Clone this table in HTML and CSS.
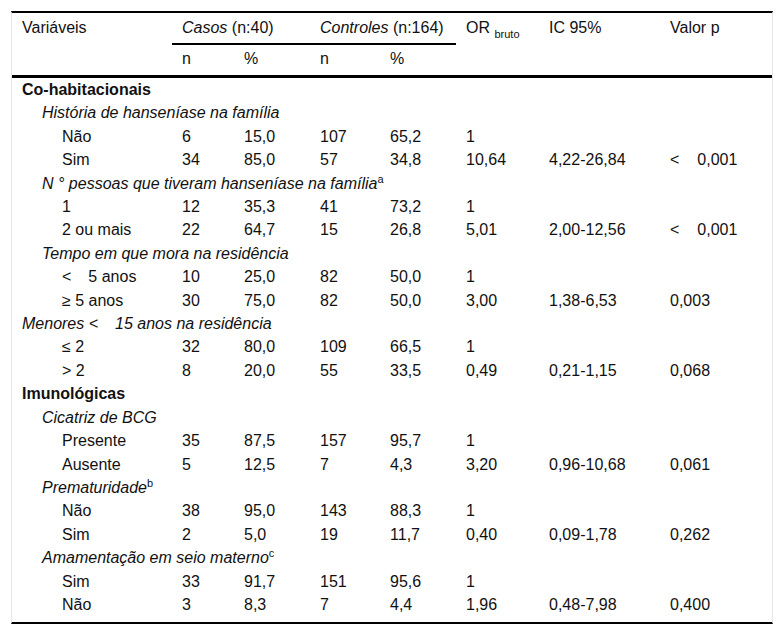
FILE: index.html
```html
<!DOCTYPE html>
<html lang="pt">
<head>
<meta charset="utf-8">
<title>Tabela</title>
<link rel="stylesheet" href="styles.css">
</head>
<body>
<div class="wrap">
<table class="tbl">
<colgroup>
<col class="c-var"><col class="c-n1"><col class="c-p1"><col class="c-n2"><col class="c-p2"><col class="c-or"><col class="c-ic"><col class="c-pv">
</colgroup>
<thead>
<tr class="h1">
<th rowspan="2" class="hv">Variáveis</th>
<th colspan="2" class="grp"><i>Casos</i> (n:40)</th>
<th colspan="2" class="grp"><i>Controles</i> (n:164)</th>
<th rowspan="2" class="hv">OR <sub class="sb">bruto</sub></th>
<th rowspan="2" class="hv">IC 95%</th>
<th rowspan="2" class="hv">Valor p</th>
</tr>
<tr class="h2">
<th>n</th><th>%</th><th>n</th><th>%</th>
</tr>
</thead>
<tbody>
<tr><td colspan="8" class="l0 b">Co-habitacionais</td></tr>
<tr><td colspan="8" class="l1 i">História de hanseníase na família</td></tr>
<tr><td class="l2">Não</td><td>6</td><td>15,0</td><td>107</td><td>65,2</td><td>1</td><td></td><td></td></tr>
<tr><td class="l2">Sim</td><td>34</td><td>85,0</td><td>57</td><td>34,8</td><td>10,64</td><td>4,22-26,84</td><td>&lt;<span class="gp"></span>0,001</td></tr>
<tr><td colspan="8" class="l1 i">N ° pessoas que tiveram hanseníase na família<sup class="sp">a</sup></td></tr>
<tr><td class="l2">1</td><td>12</td><td>35,3</td><td>41</td><td>73,2</td><td>1</td><td></td><td></td></tr>
<tr><td class="l2">2 ou mais</td><td>22</td><td>64,7</td><td>15</td><td>26,8</td><td>5,01</td><td>2,00-12,56</td><td>&lt;<span class="gp"></span>0,001</td></tr>
<tr><td colspan="8" class="l1 i">Tempo em que mora na residência</td></tr>
<tr><td class="l2">&lt;<span class="gs"></span>5 anos</td><td>10</td><td>25,0</td><td>82</td><td>50,0</td><td>1</td><td></td><td></td></tr>
<tr><td class="l2">≥ 5 anos</td><td>30</td><td>75,0</td><td>82</td><td>50,0</td><td>3,00</td><td>1,38-6,53</td><td>0,003</td></tr>
<tr><td colspan="8" class="l0 i">Menores &lt;<span class="gs"></span>15 anos na residência</td></tr>
<tr><td class="l2">≤ 2</td><td>32</td><td>80,0</td><td>109</td><td>66,5</td><td>1</td><td></td><td></td></tr>
<tr><td class="l2">&gt; 2</td><td>8</td><td>20,0</td><td>55</td><td>33,5</td><td>0,49</td><td>0,21-1,15</td><td>0,068</td></tr>
<tr><td colspan="8" class="l0 b">Imunológicas</td></tr>
<tr><td colspan="8" class="l1 i">Cicatriz de BCG</td></tr>
<tr><td class="l2">Presente</td><td>35</td><td>87,5</td><td>157</td><td>95,7</td><td>1</td><td></td><td></td></tr>
<tr><td class="l2">Ausente</td><td>5</td><td>12,5</td><td>7</td><td>4,3</td><td>3,20</td><td>0,96-10,68</td><td>0,061</td></tr>
<tr><td colspan="8" class="l1 i">Prematuridade<sup class="sp">b</sup></td></tr>
<tr><td class="l2">Não</td><td>38</td><td>95,0</td><td>143</td><td>88,3</td><td>1</td><td></td><td></td></tr>
<tr><td class="l2">Sim</td><td>2</td><td>5,0</td><td>19</td><td>11,7</td><td>0,40</td><td>0,09-1,78</td><td>0,262</td></tr>
<tr><td colspan="8" class="l1 i">Amamentação em seio materno<sup class="sp">c</sup></td></tr>
<tr><td class="l2">Sim</td><td>33</td><td>91,7</td><td>151</td><td>95,6</td><td>1</td><td></td><td></td></tr>
<tr class="last"><td class="l2">Não</td><td>3</td><td>8,3</td><td>7</td><td>4,4</td><td>1,96</td><td>0,48-7,98</td><td>0,400</td></tr>
</tbody>
</table>
</div>
</body>
</html>
```

FILE: styles.css
```css
html, body {
  margin: 0;
  padding: 0;
  background: #fff;
}
body {
  font-family: "Liberation Sans", Arial, sans-serif;
  font-size: 16px;
  color: #111;
}
.wrap {
  margin: 11px 11px 0 11px;
  border-top: 2px solid #000;
  border-bottom: 2px solid #000;
  border-left: 1px solid #e6e6e6;
  border-right: 1px solid #e6e6e6;
}
.tbl {
  width: 100%;
  table-layout: fixed;
  border-collapse: collapse;
  border-spacing: 0;
}
.c-var { width: 160px; }
.c-n1 { width: 62px; }
.c-p1 { width: 76px; }
.c-n2 { width: 70px; }
.c-p2 { width: 76px; }
.c-or { width: 83px; }
.c-ic { width: 121px; }
.c-pv { width: 112px; }
th {
  font-weight: normal;
  text-align: left;
  padding: 7px 0 6px 10px;
  line-height: 16px;
  white-space: nowrap;
}
.h1 th { padding-bottom: 7px; vertical-align: top; }
.h1 .hv { border-bottom: 3px solid #000; }
.h1 .grp { border-bottom: 2px solid #000; }
.h2 th { padding-top: 6px; padding-bottom: 8px; border-bottom: 3px solid #000; }
.sb { font-size: 11px; vertical-align: -5px; line-height: 0; }
td {
  padding: 0 0 0 10px;
  height: 23.4px;
  line-height: 23.4px;
  white-space: nowrap;
  text-align: left;
}
.last td { padding-bottom: 6px; }
.l0 { padding-left: 10px; }
.l1 { padding-left: 30px; }
.l2 { padding-left: 50px; }
.b { font-weight: bold; }
.i { font-style: italic; }
.sp { font-size: 11px; font-style: normal; vertical-align: 6px; line-height: 0; }
.gp { display: inline-block; width: 18px; }
.gs { display: inline-block; width: 17px; }
```
